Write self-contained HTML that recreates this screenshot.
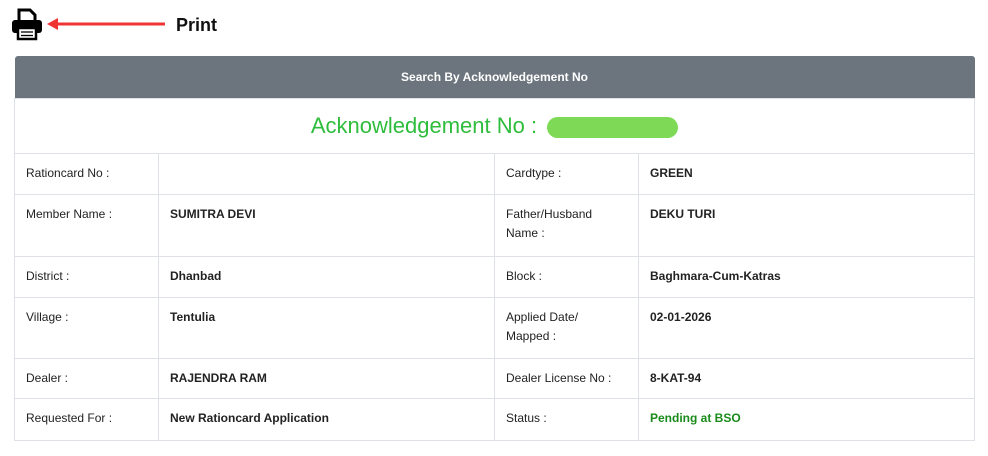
<!DOCTYPE html>
<html><head><style>
body{margin:0;background:#fff;font-family:"Liberation Sans",sans-serif;width:988px;height:456px;overflow:hidden;position:relative}
.top{position:absolute;left:12px;top:8px}
table{position:absolute;left:14px;top:56px;width:961px;border-collapse:collapse;font-size:12px;color:#222;table-layout:fixed}
th{background:#6c757d;color:#fff;height:42px;padding:0;font-size:12px;font-weight:bold;border-radius:3px 3px 0 0}
td{border:1px solid #dee2e6;vertical-align:top;padding:12px 11px 0 11px;box-sizing:border-box}
td.b{font-weight:bold}
.ack td{height:55px;text-align:center;vertical-align:middle;padding:0;font-size:22px;color:#2ebd3c}
.pill{display:inline-block;width:131px;height:21px;background:#7ed957;border-radius:11px;vertical-align:middle;margin-left:4px}
</style></head><body>
<div class="top">
<svg width="220" height="34" viewBox="0 0 220 34">
<path d="M7 2h11l5 5v7H7z" fill="#fff" stroke="#000" stroke-width="3"/>
<rect x="0" y="12" width="30" height="13" rx="3" fill="#000"/>
<rect x="6" y="20" width="18" height="11" fill="#fff" stroke="#000" stroke-width="2.5"/>
<line x1="9" y1="24" x2="21" y2="24" stroke="#000" stroke-width="1.3"/><line x1="9" y1="27.5" x2="21" y2="27.5" stroke="#000" stroke-width="1.3"/>
<polygon points="35,16 46,10 46,22" fill="#f03434"/>
<rect x="45" y="14.5" width="108" height="3" fill="#f03434"/>
<text x="164" y="23" font-family="Liberation Sans" font-weight="bold" font-size="18" fill="#111">Print</text>
</svg></div>
<table>
<colgroup><col style="width:144px"><col style="width:336px"><col style="width:144px"><col></colgroup>
<tr><th colspan="4">Search By Acknowledgement No</th></tr>
<tr class="ack"><td colspan="4">Acknowledgement No : <span class="pill"></span></td></tr>
<tr style="height:41px"><td>Rationcard No :</td><td class="b"></td><td>Cardtype :</td><td class="b">GREEN</td></tr>
<tr style="height:62px"><td>Member Name :</td><td class="b">SUMITRA DEVI</td><td style="line-height:19px;padding-top:10px">Father/Husband<br>Name :</td><td class="b">DEKU TURI</td></tr>
<tr style="height:41px"><td>District :</td><td class="b">Dhanbad</td><td>Block :</td><td class="b">Baghmara-Cum-Katras</td></tr>
<tr style="height:61px"><td>Village :</td><td class="b">Tentulia</td><td style="line-height:19px;padding-top:10px">Applied Date/<br>Mapped :</td><td class="b">02-01-2026</td></tr>
<tr style="height:40px"><td>Dealer :</td><td class="b">RAJENDRA RAM</td><td>Dealer License No :</td><td class="b">8-KAT-94</td></tr>
<tr style="height:42px"><td>Requested For :</td><td class="b">New Rationcard Application</td><td>Status :</td><td class="b" style="color:#1a8a1a">Pending at BSO</td></tr>
</table>
</body></html>
